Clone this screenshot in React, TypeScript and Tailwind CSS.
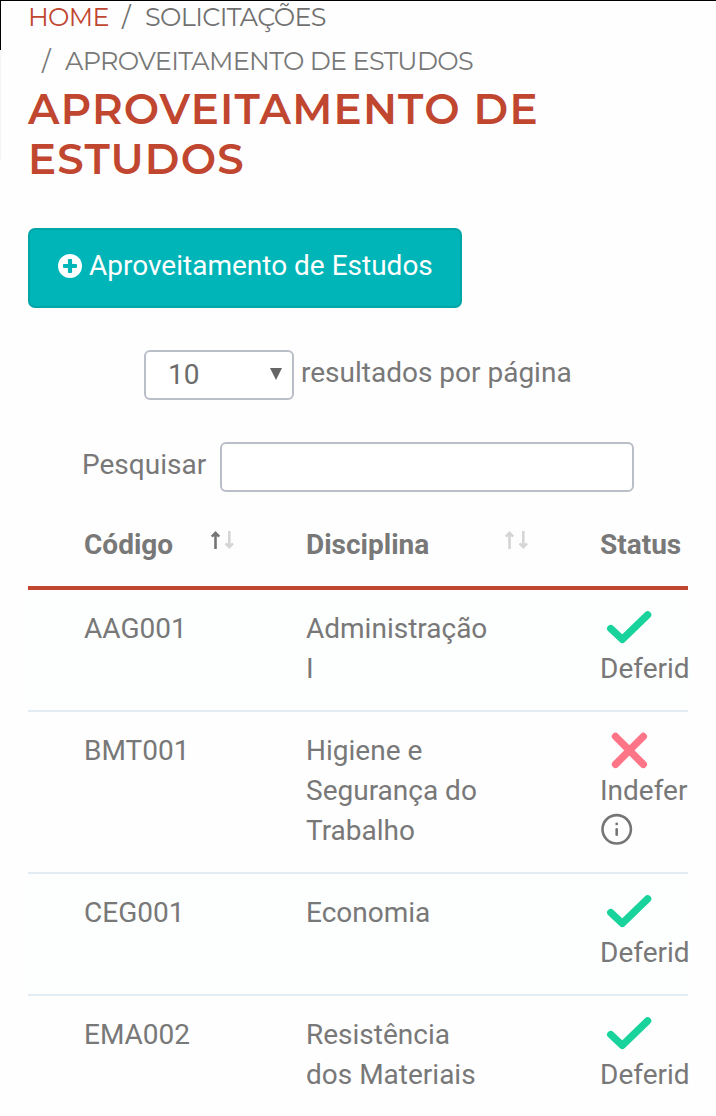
import React from "react";

type Row = {
  code: string;
  lines: string[];
  approved: boolean;
  height: string;
};

const rows: Row[] = [
  { code: "AAG001", lines: ["Administração", "I"], approved: true, height: "h-[120px]" },
  { code: "BMT001", lines: ["Higiene e", "Segurança do", "Trabalho"], approved: false, height: "h-[160px]" },
  { code: "CEG001", lines: ["Economia"], approved: true, height: "h-[120px]" },
  { code: "EMA002", lines: ["Resistência", "dos Materiais"], approved: true, height: "h-[120px]" },
];

function Check() {
  return (
    <svg className="block h-10 w-[60px]" viewBox="0 0 60 40" fill="none" stroke="#18d39b" strokeWidth="7.4" strokeLinecap="round" strokeLinejoin="round">
      <path d="M10.8 19.6 22.3 30.4 47.6 5.8" />
    </svg>
  );
}

function Cross() {
  return (
    <svg className="block h-10 w-[60px]" viewBox="0 0 60 40" fill="none" stroke="#ff7588" strokeWidth="7.4" strokeLinecap="round">
      <path d="M15.5 5.5 43.3 33.3M43.3 5.5 15.5 33.3" />
    </svg>
  );
}

function Info() {
  return (
    <svg className="block h-10 w-10" viewBox="0 0 40 40" fill="none" stroke="#757575" strokeWidth="2.6" strokeLinecap="round">
      <circle cx="16.7" cy="18.3" r="14.2" />
      <path d="M16.7 18.4v5.4" />
      <circle cx="16.7" cy="12.9" r="1.4" fill="#757575" stroke="none" />
    </svg>
  );
}

function Sort({ active = false }: { active?: boolean }) {
  return (
    <svg className="block h-6 w-7" viewBox="0 0 28 24" fill="none" strokeWidth="2.6">
      <path d="M7.5 21V5M3.8 8.6 7.5 4.9l3.7 3.7" stroke={active ? "#757575" : "#d5d5d5"} />
      <path d="M21.3 3v16M17.6 15.4l3.7 3.7 3.7-3.7" stroke="#d5d5d5" />
    </svg>
  );
}

export default function App() {
  return (
    <main className="flex h-[1116px] w-[716px] flex-col overflow-hidden border-t border-black bg-[#fefefe] font-['Roboto',sans-serif] text-[28px] leading-10 whitespace-nowrap text-[#787878]">
      <div className="flex h-[227px] shrink-0">
        <div className="flex w-7 flex-col">
          <div className="h-[49px] w-px bg-black" />
          <div className="h-[110px] w-px bg-[#f5f5f5]" />
        </div>
        <header className="flex flex-col font-['Montserrat','Lato',sans-serif]">
          <nav className="flex flex-col text-[25.5px] leading-[44px] tracking-[-0.65px] text-[#707070]">
            <div className="-mt-[6px] flex h-[44px]">
              <a className="w-[94px] text-[#c04630]">HOME</a>
              <span className="w-[23px]">/</span>
              <span>SOLICITAÇÕES</span>
            </div>
            <div className="flex h-[44px] text-[#787878]">
              <span className="w-[37px] pl-[14px]">/</span>
              <span>APROVEITAMENTO DE ESTUDOS</span>
            </div>
          </nav>
          <h1 className="mt-px flex flex-col text-[42px] leading-[50px] font-semibold tracking-[1.2px] text-[#c04630]">
            <span>APROVEITAMENTO DE</span>
            <span>ESTUDOS</span>
          </h1>
        </header>
      </div>

      <button className="ml-7 flex h-20 w-[434px] shrink-0 items-start rounded-[7px] border-2 border-[#00a5a8] bg-[#00b5b8] pt-4 pl-7 text-[28px] leading-10 text-white">
        <svg className="mt-2 mr-[7px] h-6 w-6" viewBox="0 0 24 24">
          <circle cx="12" cy="12" r="12" fill="white" />
          <rect x="9.9" y="5" width="4.2" height="14" rx="1" fill="#00b5b8" />
          <rect x="5" y="9.9" width="14" height="4.2" rx="1" fill="#00b5b8" />
        </svg>
        Aproveitamento de Estudos
      </button>

      <div className="mt-[42px] ml-[144px] flex h-[50px] shrink-0">
        <div className="flex w-[150px] items-start justify-between rounded-[6px] border-2 border-[#babfc7] bg-white pt-[3px] pr-[10px] pl-[22px] text-[#6b6b6b]">
          <span>10</span>
          <svg className="mt-[13px] h-3 w-3" viewBox="0 0 12 12"><path d="M0 0h12L6 12z" fill="#666" /></svg>
        </div>
        <span className="ml-[7px] pt-[3px]">resultados por página</span>
      </div>

      <div className="mt-[42px] ml-[82px] flex h-[50px] shrink-0">
        <label className="w-[138px] pt-[3px]">Pesquisar</label>
        <input className="h-[50px] w-[414px] rounded-[6px] border-2 border-[#babfc7] bg-white" />
      </div>

      <section className="ml-7 w-[660px] shrink-0">
        <div className="flex h-[98px] border-b-4 border-[#c04630] pl-14 font-bold">
          <div className="flex w-[222px] shrink-0 pt-[33px]"><span className="w-[124px]">Código</span><span className="mt-[3px]"><Sort active /></span></div>
          <div className="flex w-[294px] shrink-0 pt-[33px]"><span className="w-[196px]">Disciplina</span><span className="mt-[3px]"><Sort /></span></div>
          <div className="pt-[33px]">Status</div>
        </div>
        {rows.map((row, i) => (
          <div key={row.code} className={i % 2 === 0 ? "border-b-2 border-[#e3ebf3] bg-[#fdfefe]" : "border-b-2 border-[#e3ebf3]"}>
            <div className={`flex pt-[19px] pl-14 ${row.height}`}>
              <div className="w-[222px] shrink-0">{row.code}</div>
              <div className="w-[294px] shrink-0">{row.lines.map((line) => <div key={line}>{line}</div>)}</div>
              <div>
                {row.approved ? <Check /> : <Cross />}
                <div>{row.approved ? "Deferid" : "Indefer"}</div>
                {!row.approved && <Info />}
              </div>
            </div>
          </div>
        ))}
      </section>
    </main>
  );
}
